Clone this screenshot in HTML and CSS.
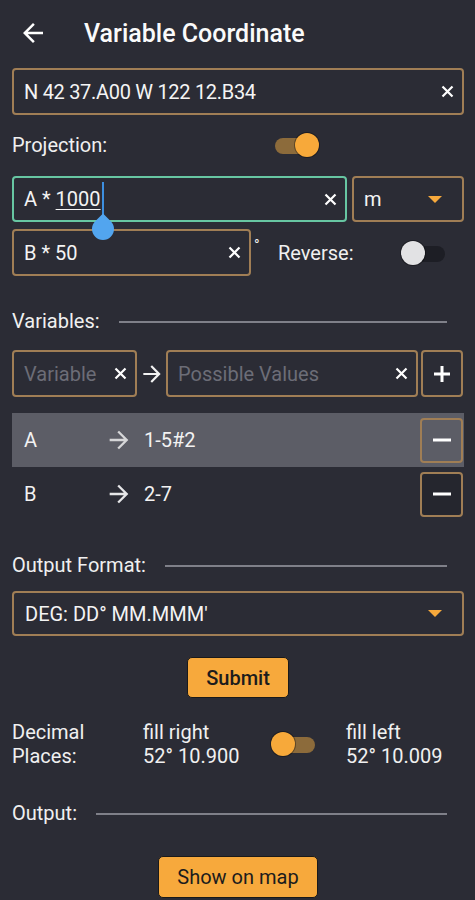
FILE: index.html
```html
<!DOCTYPE html>
<html>
<head>
<meta charset="utf-8">
<link rel="stylesheet" href="styles.css">
</head>
<body>
<header class="appbar">
  <svg class="back" viewBox="0 0 24 24"><path d="M20 11H7.83l5.59-5.59L12 4l-8 8 8 8 1.41-1.41L7.83 13H20v-2z" fill="#fff"/></svg>
  <h1>Variable Coordinate</h1>
</header>
<main class="content">
  <div class="field coord">
    <span class="val">N 42 37.A00 W 122 12.B34</span>
    <svg class="clear" viewBox="0 0 13 13"><path d="M1.5 1.5l10 10M11.5 1.5l-10 10"/></svg>
  </div>

  <div class="proj">
    <span class="label">Projection:</span>
    <div class="switch on">
      <span class="track"></span><span class="thumb"></span>
    </div>
  </div>

  <div class="row dist-row">
    <div class="field focus dist">
      <span class="val">A * <u>1000</u></span><span class="caret"><span class="handle"></span></span>
      <svg class="clear" viewBox="0 0 13 13"><path d="M1.5 1.5l10 10M11.5 1.5l-10 10"/></svg>
    </div>
    <div class="field select unit">
      <span class="val">m</span>
      <span class="tri"></span>
    </div>
  </div>

  <div class="row angle-row">
    <div class="field angle">
      <span class="val">B * 50</span>
      <svg class="clear" viewBox="0 0 13 13"><path d="M1.5 1.5l10 10M11.5 1.5l-10 10"/></svg>
    </div>
    <span class="deg">°</span>
    <span class="label rev">Reverse:</span>
    <div class="switch off">
      <span class="track"></span><span class="thumb"></span>
    </div>
  </div>

  <div class="section sec-vars">
    <span class="label">Variables:</span><span class="rule"></span>
  </div>

  <div class="row var-row">
    <div class="field varname">
      <span class="val ph">Variable</span>
      <svg class="clear" viewBox="0 0 13 13"><path d="M1.5 1.5l10 10M11.5 1.5l-10 10"/></svg>
    </div>
    <div class="arrow-box">
      <svg class="fwd" viewBox="0 0 24 24"><path d="M12 4l-1.41 1.41L16.17 11H4v2h12.17l-5.58 5.59L12 20l8-8z" fill="#f2f2f2"/></svg>
    </div>
    <div class="field values">
      <span class="val ph">Possible Values</span>
      <svg class="clear" viewBox="0 0 13 13"><path d="M1.5 1.5l10 10M11.5 1.5l-10 10"/></svg>
    </div>
    <div class="btn-icon add">
      <svg viewBox="0 0 18 18"><path d="M9 1v16M1 9h16"/></svg>
    </div>
  </div>

  <div class="list">
    <div class="item selected">
      <span>A</span>
      <svg class="fwd light" viewBox="0 0 24 24"><path d="M12 4l-1.41 1.41L16.17 11H4v2h12.17l-5.58 5.59L12 20l8-8z" fill="#d6d6d8"/></svg>
      <span>1-5#2</span>
      <div class="btn-icon del"><svg viewBox="0 0 18 4"><path d="M0 2h18"/></svg></div>
    </div>
    <div class="item">
      <span>B</span>
      <svg class="fwd light" viewBox="0 0 24 24"><path d="M12 4l-1.41 1.41L16.17 11H4v2h12.17l-5.58 5.59L12 20l8-8z" fill="#e6e6e8"/></svg>
      <span>2-7</span>
      <div class="btn-icon del"><svg viewBox="0 0 18 4"><path d="M0 2h18"/></svg></div>
    </div>
  </div>

  <div class="section sec-format">
    <span class="label">Output Format:</span><span class="rule"></span>
  </div>

  <div class="field select format">
    <span class="val">DEG: DD° MM.MMM'</span>
    <span class="tri"></span>
  </div>

  <div class="btn-row submit-row">
    <button class="btn submit">Submit</button>
  </div>

  <div class="decimals">
    <span class="label">Decimal<br>Places:</span>
    <span class="label">fill right<br>52° 10.900</span>
    <div class="switch on left">
      <span class="track"></span><span class="thumb"></span>
    </div>
    <span class="label">fill left<br>52° 10.009</span>
  </div>

  <div class="section sec-output">
    <span class="label">Output:</span><span class="rule"></span>
  </div>

  <div class="btn-row map-row">
    <button class="btn map">Show on map</button>
  </div>
</main>
</body>
</html>
```

FILE: styles.css
```css
* { box-sizing: border-box; }

html, body {
  margin: 0;
  padding: 0;
  background: #2b2c35;
  height: 900px;
  overflow: hidden;
}

body {
  font-family: Roboto, "Noto Sans", sans-serif;
  color: #f2f2f2;
  font-size: 20px;
}

.appbar {
  height: 66px;
  display: flex;
  align-items: center;
  padding-left: 18px;
}

.appbar .back {
  width: 30px;
  height: 30px;
}

.appbar h1 {
  margin: 0 0 0 36px;
  font-size: 25px;
  font-weight: 500;
  color: #fafafa;
}

.content {
  padding: 2px 11px 0 12px;
}

.label {
  font-size: 20px;
  line-height: 24px;
  color: #f0f0f0;
}

/* text fields */
.field {
  display: flex;
  align-items: center;
  border: 2px solid #a07e55;
  border-radius: 4px;
  padding: 0 8px 0 10px;
  position: relative;
}

.field .val {
  flex: 1;
  font-size: 20px;
  color: #f4f4f4;
  white-space: nowrap;
}

.coord .val {
  letter-spacing: -0.3px;
}

.field .val.ph {
  color: #6c6d77;
}

.field .clear {
  width: 13px;
  height: 13px;
  flex: none;
}

.field .clear path {
  stroke: #ffffff;
  stroke-width: 2.2;
  fill: none;
}

.coord {
  height: 47px;
}

.proj {
  display: grid;
  grid-template-columns: 263px auto;
  align-items: center;
  height: 44px;
  margin-top: 8px;
}

.row {
  display: flex;
  align-items: stretch;
}

.dist-row {
  margin-top: 9px;
  height: 46px;
  gap: 5px;
}

.field.focus {
  border-color: #67c6a2;
}

.dist {
  width: 335px;
}

.dist .val {
  flex: none;
}

.dist u {
  text-decoration-thickness: 1px;
  text-underline-offset: 3px;
}

.dist .clear {
  margin-left: auto;
}

.caret {
  position: relative;
  width: 2px;
  height: 34px;
  background: #3d8fe0;
  margin-left: 1px;
}

.handle {
  position: absolute;
  left: -10px;
  top: 36px;
  width: 22px;
  height: 22px;
  background: #52a5ef;
  border-radius: 0 50% 50% 50%;
  transform: rotate(45deg);
  z-index: 2;
}

.select .tri {
  width: 0;
  height: 0;
  border-left: 7px solid transparent;
  border-right: 7px solid transparent;
  border-top: 7px solid #f7a93c;
  margin-right: 12px;
}

.unit {
  flex: 1;
}

.angle-row {
  margin-top: 7px;
  height: 47px;
  align-items: center;
}

.angle {
  width: 239px;
  height: 47px;
}

.deg {
  align-self: flex-start;
  font-size: 15px;
  margin: 7px 0 0 3px;
  width: 6px;
}

.rev {
  margin-left: 18px;
  width: 123px;
}

/* switches */
.switch {
  position: relative;
  width: 44px;
  height: 24px;
  flex: none;
}

.switch .track {
  position: absolute;
  top: 5px;
  height: 16px;
  width: 40px;
  border-radius: 8px;
}

.switch .thumb {
  position: absolute;
  top: 0;
  width: 24px;
  height: 24px;
  border-radius: 50%;
  box-shadow: 0 0 0 1px rgba(0, 0, 0, 0.35);
}

.switch.on .track {
  left: 0;
  background: #8c6b3b;
}

.switch.on .thumb {
  right: 0;
  background: #f7a93a;
}

.switch.on.left .track {
  left: auto;
  right: 0;
}

.switch.on.left .thumb {
  right: auto;
  left: 0;
}

.switch.off .track {
  right: 0;
  background: #1d1e25;
}

.switch.off .thumb {
  left: 0;
  background: #e2e2e4;
}

/* section titles */
.section {
  display: flex;
  align-items: center;
  height: 30px;
}

.section .rule {
  flex: 1;
  height: 2px;
  background: #7f8089;
  margin: 2px 17px 0 19px;
}

.sec-vars { margin-top: 30px; }

.var-row {
  margin-top: 14px;
  height: 47px;
}

.varname {
  width: 125px;
}

.arrow-box {
  width: 29px;
  display: flex;
  align-items: center;
  justify-content: center;
}

.fwd {
  width: 26px;
  height: 26px;
}

.values {
  width: 252px;
}

.btn-icon {
  border: 2px solid #a07e55;
  border-radius: 4px;
  display: flex;
  align-items: center;
  justify-content: center;
}

.btn-icon svg path {
  stroke: #ffffff;
  stroke-width: 3;
  fill: none;
}

.add {
  width: 42px;
  margin-left: 3px;
}

.add svg {
  width: 18px;
  height: 18px;
}

/* list */
.list {
  margin-top: 16px;
}

.item {
  display: grid;
  grid-template-columns: 84px 36px 1fr 43px;
  align-items: center;
  height: 54px;
  padding: 0 1px 0 12px;
  font-size: 20px;
  color: #f2f2f2;
}

.item.selected {
  background: #5c5d66;
}

.fwd.light {
  width: 28px;
  height: 28px;
  margin-left: -3px;
}

.del {
  height: 45px;
}

.del svg {
  width: 18px;
  height: 4px;
}

.item:not(.selected) .del {
  background: #25262e;
}

.sec-format { margin-top: 29px; }

.format {
  margin-top: 11px;
  height: 45px;
  padding-left: 11px;
}

.btn-row {
  display: flex;
  justify-content: center;
}

.btn {
  font-family: Roboto, "Noto Sans", sans-serif;
  font-size: 20px;
  font-weight: 500;
  color: #1c1c1c;
  background: #f7a93c;
  border: 1px solid #1a1a1a;
  border-radius: 5px;
  padding: 0;
}

.submit-row { margin-top: 21px; }

.submit {
  width: 102px;
  height: 41px;
}

.decimals {
  margin-top: 22px;
  display: grid;
  grid-template-columns: 131px 128px 75px auto;
  align-items: center;
}

.sec-output { margin-top: 30px; }

.map-row { margin-top: 28px; }

.map {
  width: 160px;
  height: 42px;
  font-weight: 400;
}
```
